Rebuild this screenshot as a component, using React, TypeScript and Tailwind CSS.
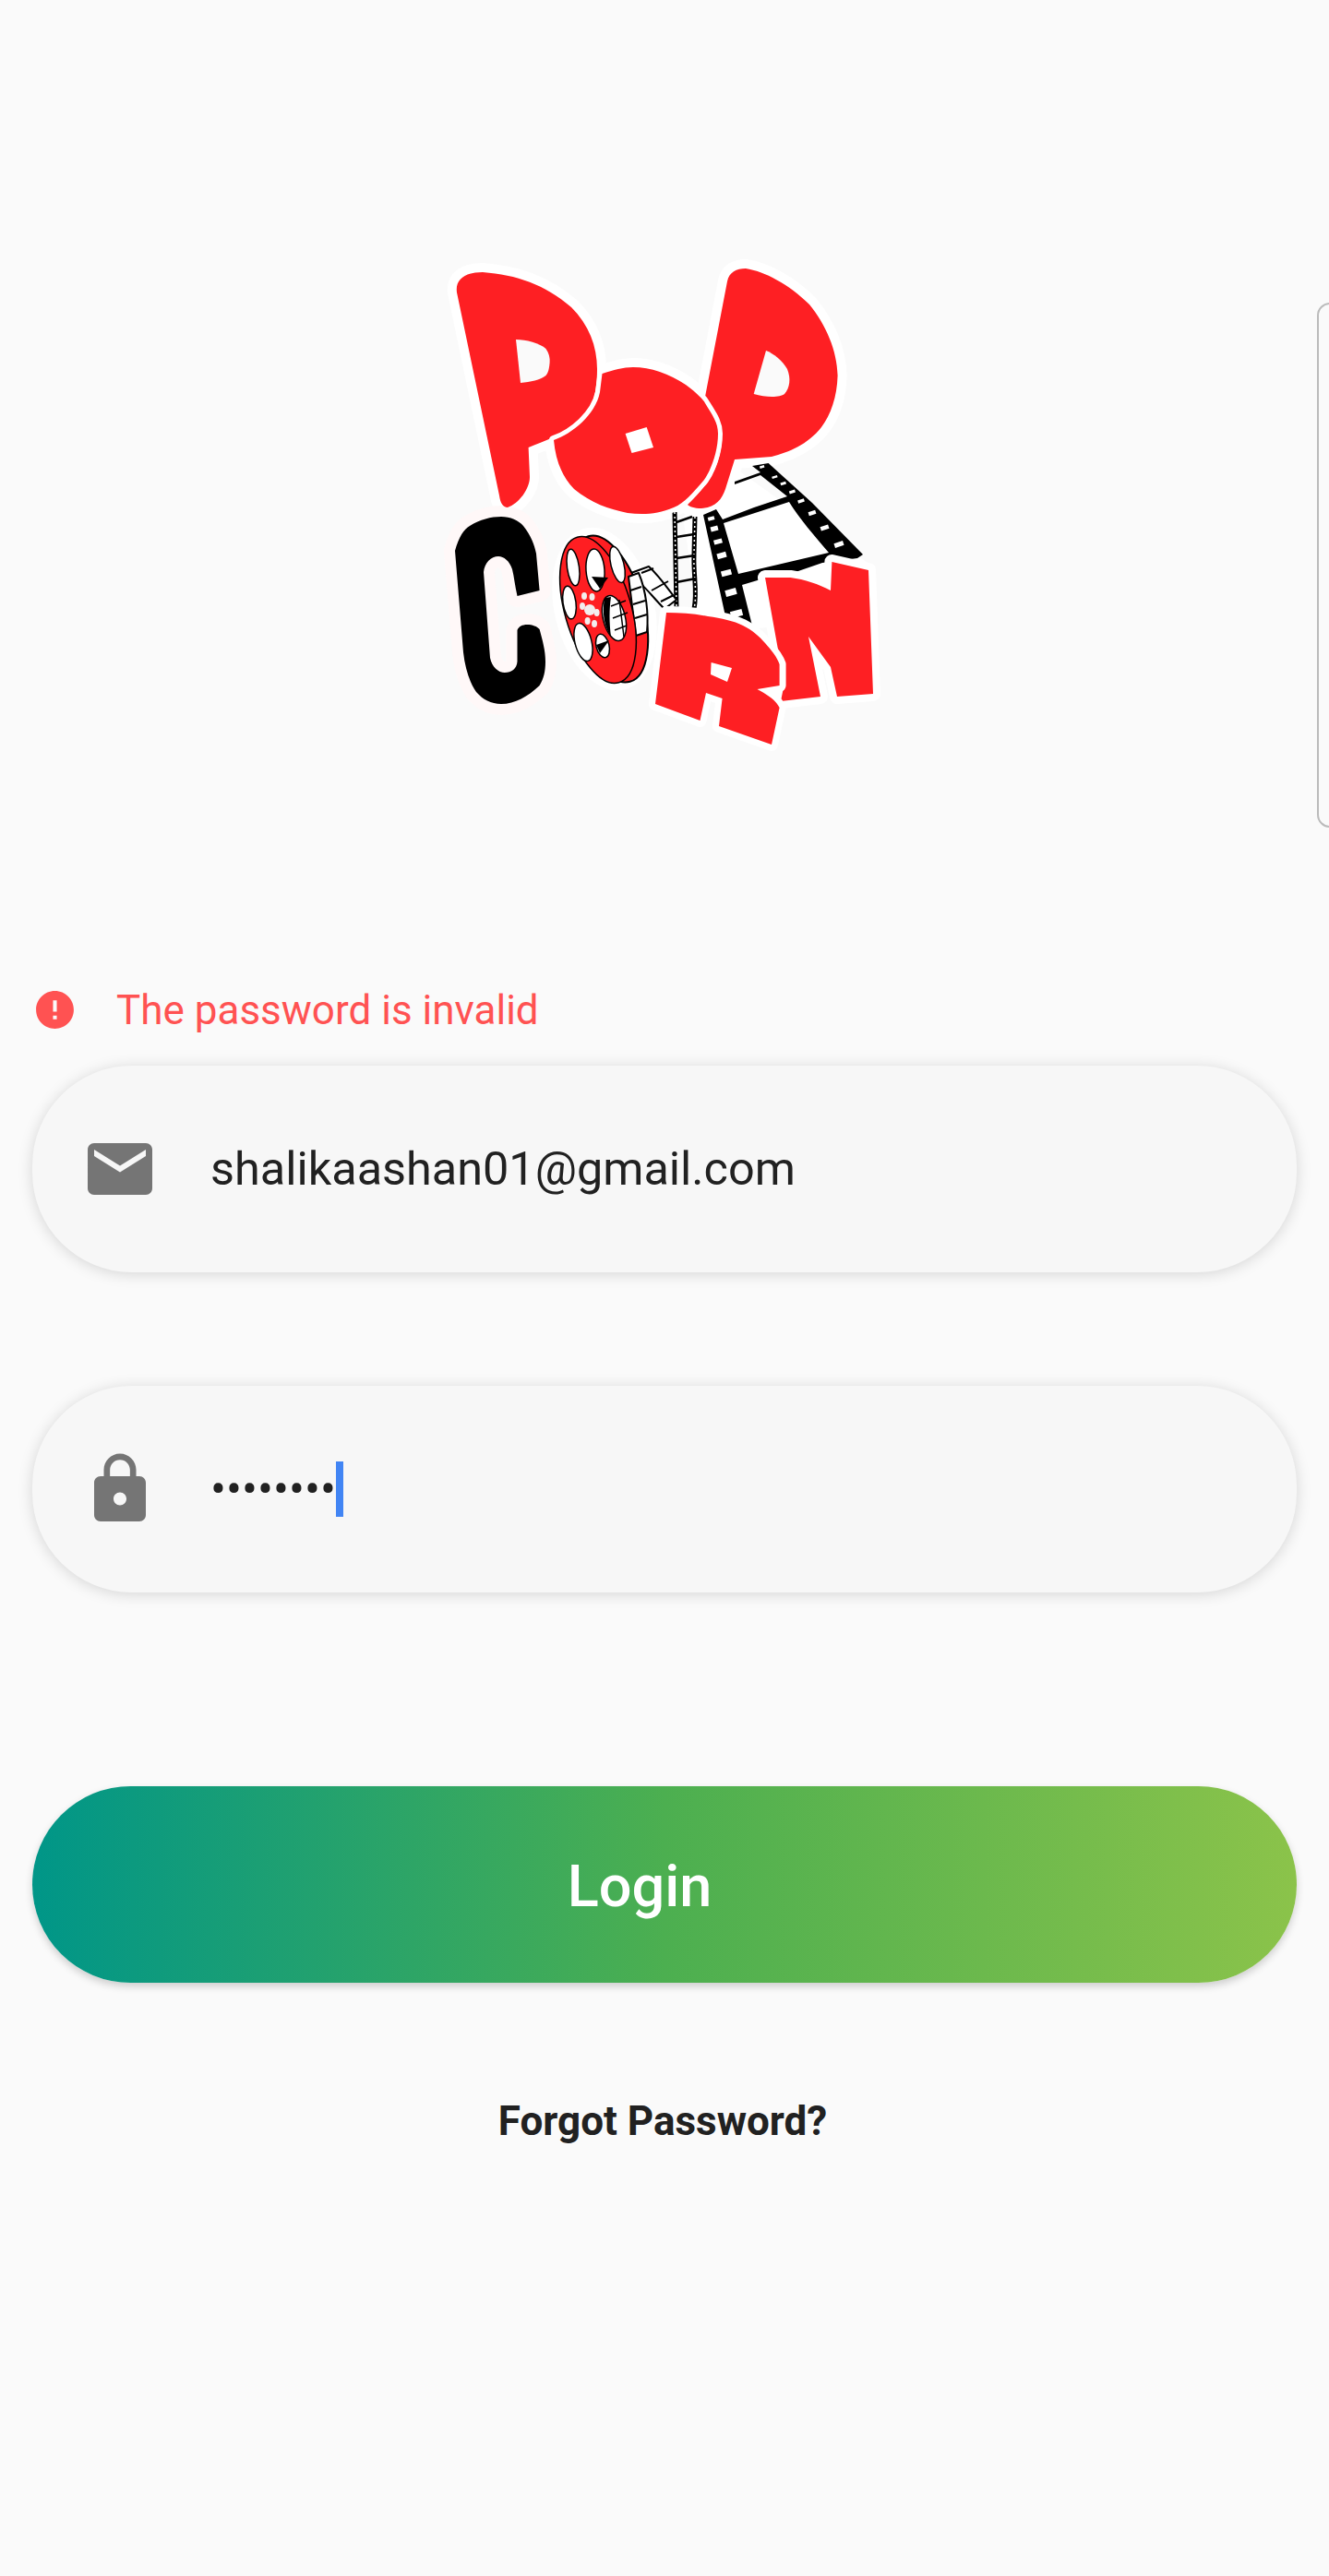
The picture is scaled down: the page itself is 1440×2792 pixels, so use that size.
const robotoFont = { fontFamily: 'Roboto, sans-serif' };

const LETTER_P1 =
  'M495 317C493 302 505 295 523 295C560 298 590 308 619 333C638 352 647 375 647 400C647 430 640 448 629 457C612 470 590 478 572.6 485L574 517C574 530 562 546 550 550C545 550 542 545 541 537Z';
const LETTER_P2 =
  'M788 305C790 295 798 291 808 291C828 294 855 308 877 330C895 352 907 380 907.6 407C907 430 900 450 890 463C875 482 855 490 836 495L796 498L786 530C782 542 775 550 760 551C752 551 747 549 745 547C760 532 782 510 782 473C782 460 772 440 764 430Z';
const LETTER_O =
  'M652.5 405C665 401 675 398 686 398C705 398 725 405 743 417C755 426 762 433 764 437C772 450 778 458 778 470C778 490 770 510 763 520C750 535 742 545 730 550C712 558 695 558 680 556C660 552 640 545 622 530C610 518 602 500 600 477C620 470 645 450 650 425Z';
const LETTER_C =
  'M493 597C497 582 503 573 509 570C520 563 532 560 543 560C553 560 562 564 567 570C575 580 579 590 581 600L584.6 640L560.5 646C558 635 557 625 555 617C552 608 546 603 540 603C532 603 525 610 524 620L531 713C533 723 540 729 547 729C554 729 560 725 560.5 717V683C562 679 566 677 571 677C577 677 582 679 584.6 682C588 695 591 705 591 717C591 728 589 736 584.6 743C572 755 558 763 543 763C532 763 523 758 516 750C509 740 504 725 502 707Z';
const LETTER_R =
  'M722 664C737 664 752 665 767 668C782 670 795 673 805 678C815 683 823 690 829 697C836 705 842 712 844.6 720V743L820.5 747C830 752 840 758 844.6 767L836 807L779 787L782.6 757L765 751L758.5 781L710 763Z';
const LETTER_N =
  'M829 626H856.6C872 628 887 633 900 640L901.4 609L941 618L946 752L907 755L900 723L876 690L889 755L846 760L850 740L844.6 713Z';

const leftHoles = [
  [770.6, 562, 7, 4],
  [774, 573, 8, 5],
  [778, 587, 9, 5],
  [782, 602, 10, 6],
  [787, 621, 11, 6],
  [792, 642, 12, 7],
  [798, 665, 13, 7],
];
const rightHoles = [
  [825.7, 506, 5, 2.5],
  [839.4, 517, 6, 2.5],
  [848.7, 524, 6, 3],
  [858.4, 533, 6.5, 3],
  [868, 543, 7, 3.5],
  [880, 556, 8, 4],
  [893.5, 572, 9, 4.5],
  [909, 590, 10, 5],
];
const petals = [
  [633, 646],
  [641.5, 647],
  [631, 657],
  [646.6, 664],
  [636.6, 673],
  [644, 676],
];

function Logo() {
  return (
    <svg viewBox="470 270 500 560" className="w-[500px] h-[560px] mx-auto block" strokeLinejoin="round">
      {/* white halo */}
      <g fill="#fff" stroke="#fff" strokeWidth="20">
        <path d={LETTER_P1} />
        <path d={LETTER_P2} />
        <path d={LETTER_O} />
      </g>
      <path d={LETTER_C} fill="#fff8f8" stroke="#fff8f8" strokeWidth="24" />
      <ellipse cx="655" cy="660" rx="54" ry="90" fill="#fff" transform="rotate(-14 655 660)" />

      {/* big film strip */}
      <path d="M800 510L940 610L900 670L760 690L740 560Z" fill="#fff" />
      <path d="M796 522L824 512L815 505L832.6 502L880 545L935 601L929 605L891 610L862 620L824 628L804 634L815 678L786 668L762 558L776 552L783 563L817 550L853 538L824 515L796 525Z" fill="#000" />
      <path d="M784 567L855 544C866 562 882 580 898 599L800 622Z" fill="#fff" />
      {leftHoles.map(([x, y, w, h]) => (
        <rect key={y} x={x - w / 2} y={y - h / 2} width={w} height={h} fill="#fff" transform={`rotate(-15 ${x} ${y})`} />
      ))}
      {rightHoles.map(([x, y, w, h]) => (
        <rect key={y} x={x - w / 2} y={y - h / 2} width={w} height={h} fill="#fff" transform={`rotate(-18 ${x} ${y})`} />
      ))}

      {/* small film strip */}
      <path d="M731 555L733 660M753 560L752 600C751 625 756 640 752 660" fill="none" stroke="#000" strokeWidth="5" />
      <path d="M731 555L733 660M753 560L752 600C751 625 756 640 752 660" fill="none" stroke="#fff" strokeWidth="1.5" strokeDasharray="2 3" />
      <path d="M733 566L750 560M733 582L752 579M733 605L753 602M733 631L754 627" stroke="#000" strokeWidth="2.5" fill="none" />
      <path d="M681 622L703 614C715 625 725 640 733 650L720 660C705 645 695 630 681 622Z" fill="#fff" stroke="#000" strokeWidth="2" />
      <path d="M695 621L708 616M706 640L724 630M716 652L730 645" stroke="#000" strokeWidth="2" />

      {/* reel: rear disc, wound film, front disc */}
      <ellipse cx="660" cy="660" rx="37" ry="82" fill="#ff1e22" stroke="#000" strokeWidth="2" transform="rotate(-16 660 660)" />
      <path d="M681 625L692 621C700 640 703 665 701 685L689 689Z" fill="#fff" stroke="#000" strokeWidth="2" />
      <path d="M683 640L695 636M686 655L699 651M688 670L701 666" stroke="#000" strokeWidth="2" />
      <ellipse cx="648" cy="661" rx="36" ry="82" fill="#ff1e22" stroke="#000" strokeWidth="1.5" transform="rotate(-16 648 661)" />
      <ellipse cx="621" cy="615" rx="6.5" ry="20" fill="#fff" stroke="#000" strokeWidth="1.5" transform="rotate(-8 621 615)" />
      <ellipse cx="645" cy="618" rx="10" ry="23" fill="#fff" stroke="#000" strokeWidth="1.5" transform="rotate(-4 645 618)" />
      <ellipse cx="617" cy="653" rx="7" ry="18" fill="#fff" stroke="#000" strokeWidth="1.5" transform="rotate(-8 617 653)" />
      <ellipse cx="632" cy="696" rx="9" ry="21" fill="#fff" stroke="#000" strokeWidth="1.5" transform="rotate(-14 632 696)" />
      <ellipse cx="665.5" cy="670" rx="12" ry="25" fill="#fff" stroke="#000" strokeWidth="1.5" transform="rotate(-14 665.5 670)" />
      <ellipse cx="653" cy="700" rx="7" ry="13" fill="#fff" stroke="#000" strokeWidth="1.5" transform="rotate(-14 653 700)" />
      <ellipse cx="669" cy="612" rx="7" ry="20" fill="#fff" stroke="#000" strokeWidth="1.5" transform="rotate(-14 669 612)" />
      <path d="M655 648C652 665 655 680 662 690C660 675 660 660 662 647Z" fill="#000" />
      <path d="M662 657L678 651M664 670L680 664M666 683L679 678M671 650L676 690" stroke="#000" strokeWidth="1.5" />
      <path d="M641 625L659 626L650 638Z" fill="#000" />
      <path d="M646 699L660 694L650 708Z" fill="#000" />
      <circle cx="639" cy="661" r="6" fill="#f3eeee" />
      {petals.map(([x, y]) => (
        <ellipse key={x} cx={x} cy={y} rx="3" ry="4" fill="#f3eeee" />
      ))}

      {/* letters */}
      <path d={LETTER_C} fill="#000" />
      <path d={LETTER_P1} fill="#fe1f23" />
      <path d="M559 368C570 368 585 372 591.5 378C595 383 596 388 595.6 393C595 400 594 404 591.5 407C585 412 575 414 564 415Z" fill="#fafafa" />
      <path d={LETTER_P2} fill="#fe1f23" />
      <path d="M830 380C838 383 848 391 853 400C857 410 856 420 850 427C845 431 830 431 816.7 427Z" fill="#fafafa" />
      <path d={LETTER_O} fill="#fe1f23" stroke="#fff" strokeWidth="10" paintOrder="stroke" />
      <path d="M677.6 470L700.7 463L708 485L684.5 491Z" fill="#fff" />
      <path d={LETTER_N} fill="#fe1f23" stroke="#fff" strokeWidth="16" paintOrder="stroke" />
      <path d={LETTER_R} fill="#fe1f23" stroke="#fff" strokeWidth="14" paintOrder="stroke" />
      <path d="M770.6 718L793 724L788 739L770 731Z" fill="#fff" />
    </svg>
  );
}

function MailIcon() {
  return (
    <svg viewBox="0 0 24 24" className="w-[84px] h-[84px] shrink-0" fill="#757575">
      <path d="M20 4H4c-1.1 0-1.99.9-1.99 2L2 18c0 1.1.9 2 2 2h16c1.1 0 2-.9 2-2V6c0-1.1-.9-2-2-2zm0 4l-8 5-8-5V6l8 5 8-5v2z" />
    </svg>
  );
}

function LockIcon() {
  return (
    <svg viewBox="0 0 24 24" className="w-[84px] h-[84px] shrink-0" fill="#757575">
      <path d="M18 8h-1V6c0-2.76-2.24-5-5-5S7 3.24 7 6v2H6c-1.1 0-2 .9-2 2v10c0 1.1.9 2 2 2h12c1.1 0 2-.9 2-2V10c0-1.1-.9-2-2-2zm-6 9c-1.1 0-2-.9-2-2s.9-2 2-2 2 .9 2 2-.9 2-2 2zm3.1-9H8.9V6c0-1.71 1.39-3.1 3.1-3.1 1.71 0 3.1 1.39 3.1 3.1v2z" />
    </svg>
  );
}

function ErrorIcon() {
  return (
    <svg viewBox="0 0 24 24" className="w-[49px] h-[49px] shrink-0" fill="#ff5252">
      <path d="M12 2C6.48 2 2 6.48 2 12s4.48 10 10 10 10-4.48 10-10S17.52 2 12 2zm1 15h-2v-2h2v2zm0-4h-2V7h2v6z" />
    </svg>
  );
}

function Field({ icon, children }: { icon: React.ReactNode; children: React.ReactNode }) {
  return (
    <div className="h-[224px] rounded-[108px] bg-[#f7f7f7] shadow-[0_2px_16px_rgba(0,0,0,0.15)] flex items-center pl-[53px]">
      {icon}
      <div className="ml-[56px] flex items-center text-[50.4px] leading-[60px] text-[#212121]">{children}</div>
    </div>
  );
}

export default function App() {
  return (
    <div className="relative min-h-[2792px] overflow-hidden bg-[#fafafa] pt-[270px]" style={robotoFont}>
      <Logo />

      {/* edge panel handle */}
      <div className="absolute left-[1427px] top-[328px] w-[30px] h-[569px] rounded-[14px] border-2 border-[#bbbbbb]" />

      <div className="px-[35px] mt-[240px]">
        <div className="flex items-center h-[49px]">
          <ErrorIcon />
          <span className="ml-[42px] pt-[2px] text-[44px] leading-[49px] text-[#ff5252]">The password is invalid</span>
        </div>

        <div className="mt-[36px]">
          <Field icon={<MailIcon />}>shalikaashan01@gmail.com</Field>
        </div>
        <div className="mt-[123px]">
          <Field icon={<LockIcon />}>
            <span>••••••••</span>
            <span className="w-2 h-[60px] bg-[#4285f4]" />
          </Field>
        </div>

        <button className="mt-[210px] block w-full h-[213px] rounded-[107px] bg-linear-to-r/srgb from-[#009688] via-[#4caf50] to-[#8bc34a] shadow-[0_4px_8px_rgba(0,0,0,0.18)] text-white text-[63px] font-medium pr-[54px] pt-[6px]">
          Login
        </button>

        <div className="mt-[124px] text-center text-[#212121] text-[44px] leading-[53px] font-bold pr-[4px]">
          Forgot Password?
        </div>
      </div>
    </div>
  );
}
